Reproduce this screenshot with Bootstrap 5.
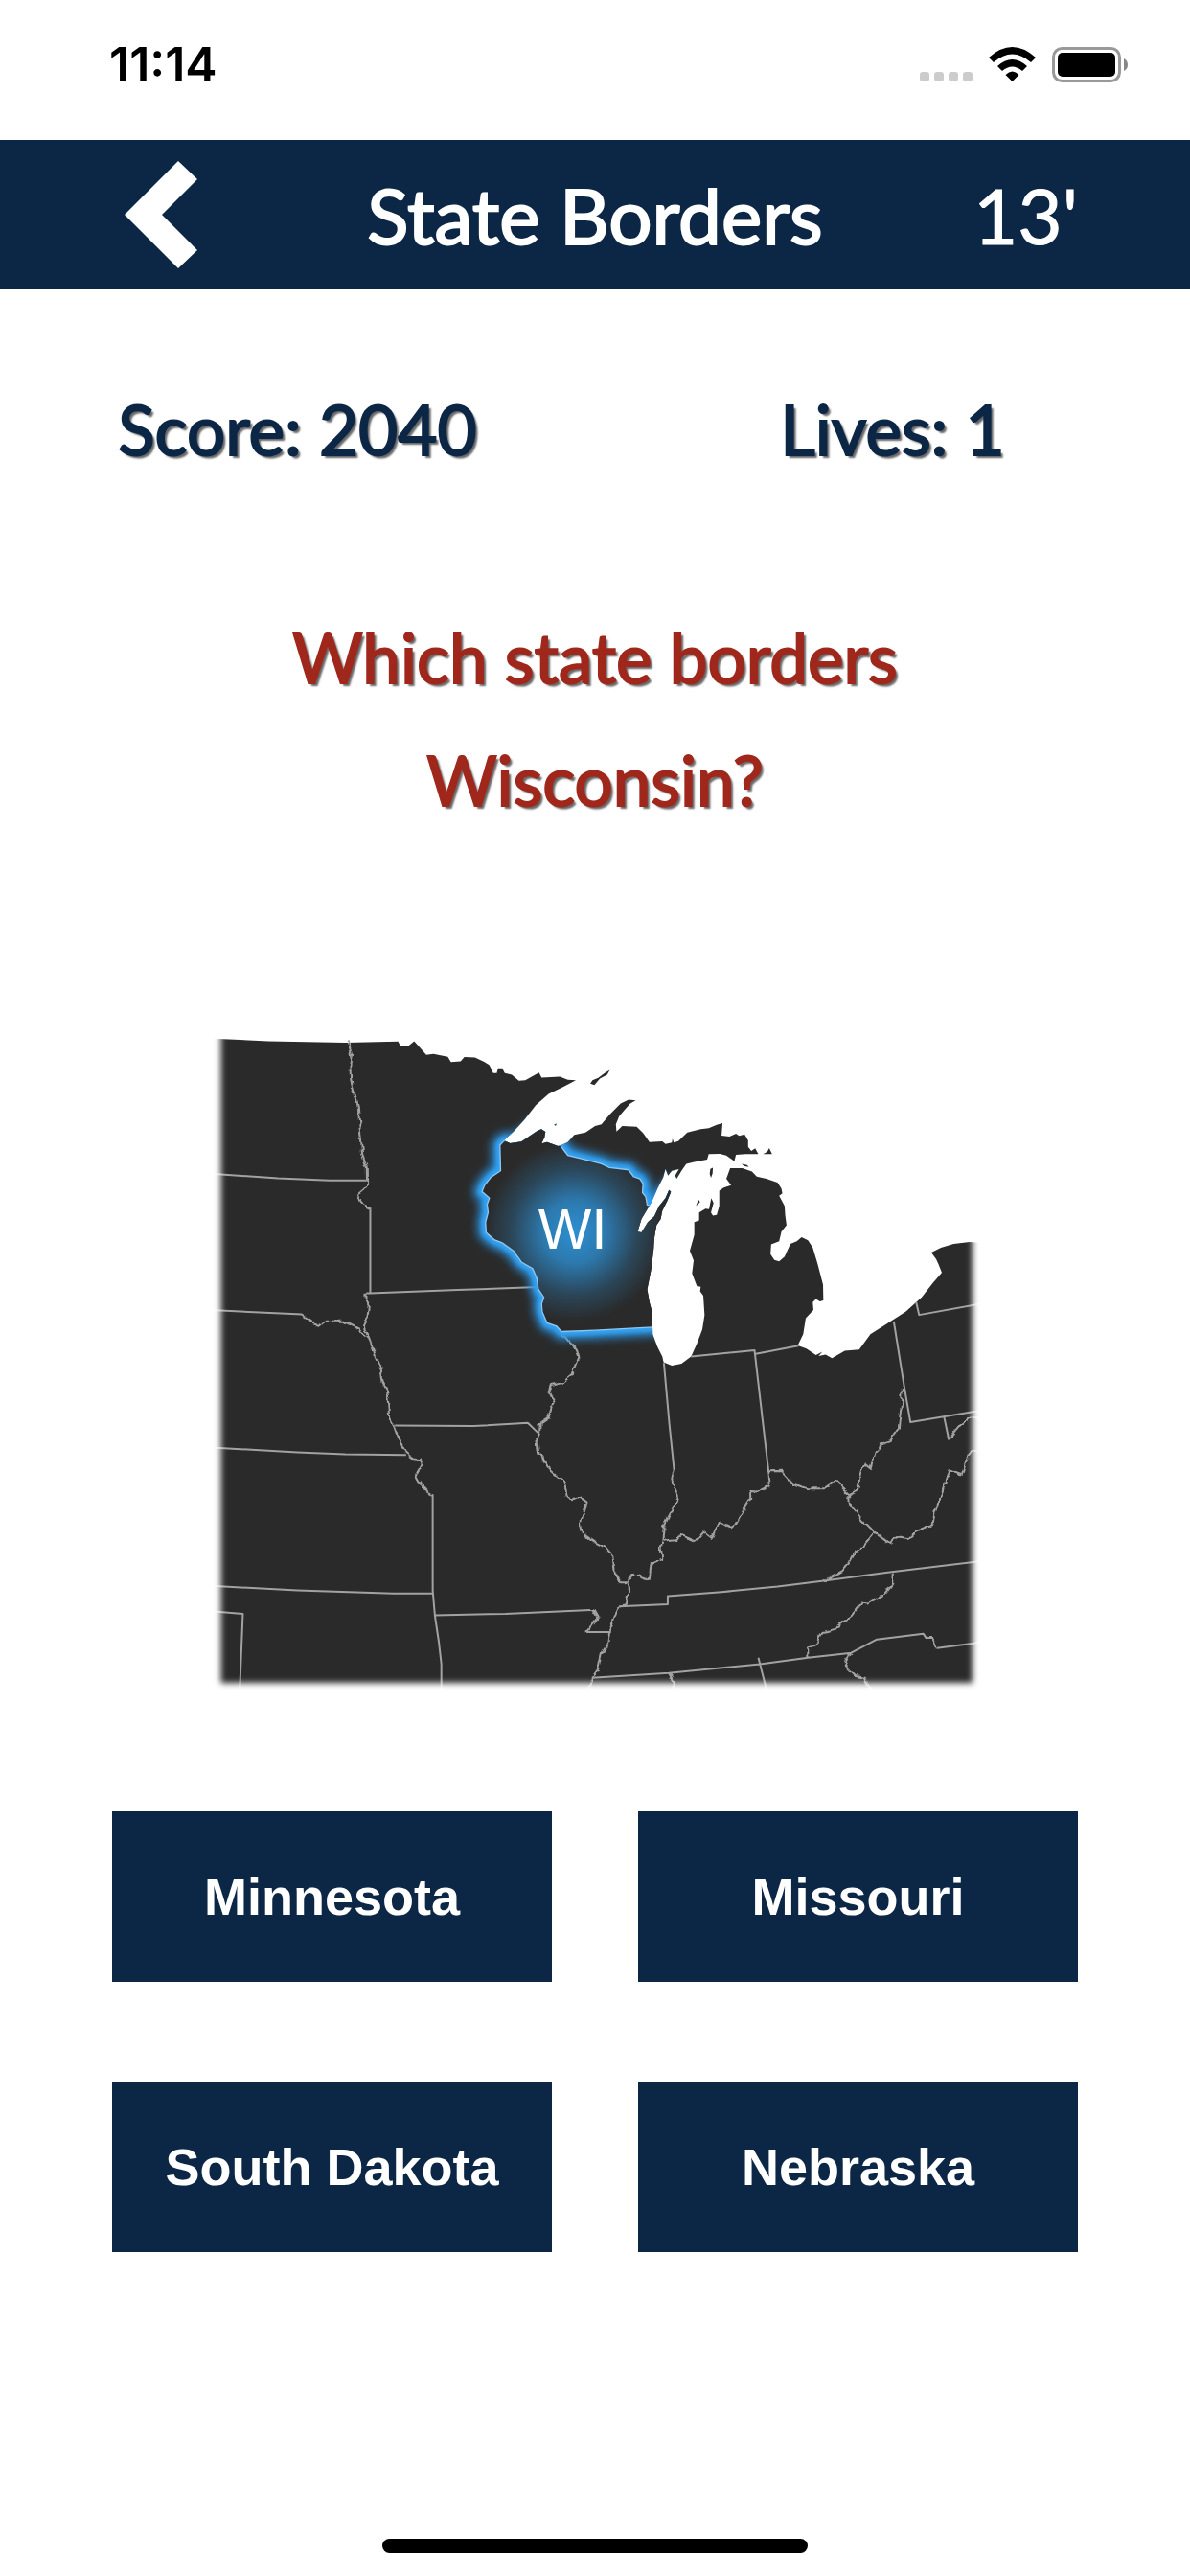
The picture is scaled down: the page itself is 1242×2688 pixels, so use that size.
<!DOCTYPE html>
<html lang="en">
<head>
<meta charset="utf-8">
<meta name="viewport" content="width=device-width, initial-scale=1">
<title>State Borders</title>
<link href="https://cdn.jsdelivr.net/npm/bootstrap@5.3.0/dist/css/bootstrap.min.css" rel="stylesheet">
<style>
  :root { --navy: #0c2646; --brick: #a0271b; --gutter: 117px; }
  body { font-family: Lato, sans-serif; background: #fff; }
  .status-bar { height: 146px; padding: 0 64px 12px 114px; color: #000; }
  .clock { font: 600 50px/56px Inter, sans-serif; }
  .status-icons { height: 40px; width: 220px; }
  .title-bar { height: 156px; background: var(--navy); padding: 0 var(--gutter); color: #fff; }
  .title-bar h1, .timer { font-size: 80px; line-height: 96px; }
  .title-bar h1 { -webkit-text-stroke: 2px #fff; }
  .timer { -webkit-text-stroke: 1px #fff; }
  .back-btn { padding: 0 13px; }
  .back-btn svg { width: 76px; height: 112px; }
  .stats { padding-top: 98px; font-size: 71px; line-height: 96px; color: var(--navy); }
  .game-text { -webkit-text-stroke: 2px currentColor; text-shadow: 3px 3px 2px rgba(0, 0, 0, .6); }
  .question { padding: 126px 200px 0; font-size: 71px; line-height: 128px; color: var(--brick); }
  .map-area { padding-top: 180px; }
  .map-area svg { width: 67%; }
  .answers { padding: 110px var(--gutter) 0; }
  .answers .row { --bs-gutter-x: 90px; --bs-gutter-y: 104px; margin-top: 0; }
  .answers .col-6 { margin-top: 0; margin-bottom: var(--bs-gutter-y); }
  .answer-btn { height: 178px; background: var(--navy); color: #fff; font: 700 54px/64px "Liberation Sans", sans-serif; }
  .answer-btn:hover { background: #16386a; color: #fff; }
  .home-bar { width: 444px; height: 15px; margin-bottom: 24px; }
</style>
</head>
<body>
<div class="d-flex flex-column min-vh-100">
  <div class="status-bar d-flex justify-content-between align-items-center">
    <span class="clock">11:14</span>
    <svg class="status-icons" viewBox="958 47 220 40" aria-hidden="true">
      <g fill="#ccc"><rect x="960" y="75" width="10" height="10" rx="3"/><rect x="975" y="75" width="10" height="10" rx="3"/><rect x="990" y="75" width="10" height="10" rx="3"/><rect x="1005" y="75" width="10" height="10" rx="3"/></g>
      <path d="M1032 60Q1056.500 38 1081 60L1076 65Q1056.500 48 1037 65ZM1041 69Q1056.500 55 1072 69L1067 74Q1056.500 65 1046 74ZM1049.500 78Q1056.500 71 1063.500 78L1056.500 85Z"/>
      <rect x="1099.500" y="50.500" width="69" height="34" rx="9" fill="none" stroke="#999" stroke-width="3"/>
      <rect x="1104" y="55" width="60" height="25" rx="5"/>
      <path d="M1173 61Q1177 63 1177 67.500T1173 74Z" fill="#888"/>
    </svg>
  </div>

  <header class="title-bar">
    <div class="row g-0 h-100 align-items-center">
      <div class="col-2"><button type="button" class="btn border-0 rounded-0 back-btn" aria-label="Back">
        <svg viewBox="130 168 76 112" class="d-block" aria-hidden="true"><path d="M186 168L206 187 169 224 206 261 186 280 130 224Z" fill="#fff"/></svg>
      </button></div>
      <h1 class="col-8 m-0 text-center fw-normal">State Borders</h1>
      <div class="col-2 timer text-end">13'</div>
    </div>
  </header>

  <main class="flex-grow-1">
    <div class="row g-0 text-center stats game-text">
      <div class="col-6">Score: 2040</div>
      <div class="col-6">Lives: 1</div>
    </div>
    <h2 class="question game-text m-0 text-center fw-normal">Which state borders Wisconsin?</h2>

    <div class="map-area text-center">
      <svg viewBox="-15 0 2490 2160" role="img" aria-label="Map with Wisconsin highlighted">
        <defs>
          <filter id="soft8" x="-5%" y="-5%" width="110%" height="110%"><feGaussianBlur stdDeviation="9"/></filter>
          <filter id="glowWide" x="-20%" y="-20%" width="140%" height="140%"><feGaussianBlur stdDeviation="15"/></filter>
          <filter id="glowTight" x="-20%" y="-20%" width="140%" height="140%"><feGaussianBlur stdDeviation="7"/></filter>
          <filter id="meander" filterUnits="userSpaceOnUse" x="0" y="0" width="2490" height="2160"><feTurbulence type="fractalNoise" baseFrequency=".035" numOctaves="2" seed="4"/><feDisplacementMap in="SourceGraphic" scale="20" xChannelSelector="R" yChannelSelector="G"/></filter>
          <mask id="fade" maskUnits="userSpaceOnUse" x="0" y="0" width="2490" height="2160"><rect x="61" y="-80" width="2348" height="2169" fill="#fff" filter="url(#soft8)"/></mask>
          <radialGradient id="wiCore" gradientUnits="userSpaceOnUse" cx="1165" cy="680" r="280">
            <stop offset="0" stop-color="#2d8fd2"/><stop offset=".35" stop-color="#2d8fd2" stop-opacity=".78"/><stop offset=".7" stop-color="#2d8fd2" stop-opacity=".28"/><stop offset="1" stop-color="#2d8fd2" stop-opacity="0"/>
          </radialGradient>
          <path id="land" d="M20 76L210 85 450 90 615 86 622 100 645 102 665 85 680 102 703 128 725 125 770 134 780 150 810 148 822 135 855 136 885 150 900 160 912 185 923 185 927 170 940 170 948 185 970 190 992 209 1012 207 1055 183 1063 199 1120 196 1145 206 1170 207 1130 228 1085 250 1045 285 1010 330 975 368 945 395 965 404 1000 399 1050 365 1062 360 1075 368 1072 385 1063 405 1080 400 1115 413 1125 410 1145 400 1165 378 1200 370 1230 350 1250 345 1275 315 1310 280 1335 268 1357 270 1340 280 1322 300 1305 320 1295 345 1297 367 1315 350 1360 352 1380 372 1400 400 1440 398 1450 406 1470 402 1472 390 1476 402 1490 397 1518 370 1560 360 1585 357 1610 346 1628 341 1625 380 1650 383 1670 374 1680 381 1697 376 1708 395 1708 415 1718 428 1730 420 1740 438 1700 438 1670 440 1665 460 1640 442 1620 437 1585 438 1580 455 1540 462 1515 468 1500 490 1485 515 1480 505 1492 485 1470 490 1458 505 1450 485 1443 510 1425 545 1405 590 1390 615 1375 640 1363 680 1375 682 1395 650 1415 632 1430 600 1450 575 1461 550 1467 556 1455 585 1440 615 1435 640 1422 660 1415 700 1413 735 1405 800 1393 860 1400 900 1408 930 1410 1000 1425 1040 1440 1070 1444 1088 1470 1098 1500 1092 1530 1070 1548 1030 1565 985 1572 940 1568 880 1558 866 1560 852 1548 850 1533 810 1538 770 1526 740 1540 690 1540 650 1555 645 1555 620 1575 608 1586 610 1593 575 1600 590 1592 620 1598 630 1610 628 1618 600 1618 552 1632 542 1655 535 1640 515 1652 482 1690 482 1720 492 1735 508 1765 515 1800 527 1812 545 1815 560 1805 568 1822 600 1824 630 1828 660 1812 680 1805 710 1780 720 1778 750 1790 768 1805 773 1822 758 1840 718 1860 710 1875 697 1895 707 1910 730 1925 780 1942 845 1943 895 1932 898 1920 890 1910 900 1912 925 1888 950 1880 1000 1863 1035 1890 1045 1920 1065 1940 1055 1928 1068 1950 1064 1970 1075 2010 1052 2055 1048 2090 1000 2130 975 2200 930 2250 885 2285 840 2313 808 2302 780 2295 765 2280 745 2310 730 2350 718 2400 712 2440 715 2440 2150 20 2150ZM1215 218L1222 207 1240 200 1260 185 1276 175 1268 190 1245 202 1228 222ZM1755 438L1768 430 1774 419 1780 432 1783 438ZM1588 500L1590 484 1598 480 1597 498 1592 512ZM1688 468L1705 472 1710 478 1695 475ZM1545 600L1553 580 1558 588ZM1102 345L1110 343 1107 350Z"/>
          <clipPath id="landClip"><use href="#land"/></clipPath>
          <path id="wi" d="M990 394L945 397 933 410 935 490 905 510 885 535 877 555 900 575 893 595 896 620 888 650 890 683 915 705 940 715 975 740 1000 775 1035 795 1048 825 1053 860 1070 885 1063 905 1065 930 1080 965 1110 975 1125 992 1230 988 1410 978 1480 974 1480 560 1462 542 1412 600 1393 597 1388 570 1378 558 1380 530 1370 515 1350 508 1335 487 1275 480 1250 468 1200 455 1145 442 1130 422 1118 405 1060 340Z"/>
        </defs>
        <g mask="url(#fade)">
          <use href="#land" fill="#2a2a2a"/>
          <g fill="none" stroke="#a2a2a2" stroke-width="6" stroke-linejoin="round">
            <path d="M528 605V870M723 1500V1800L730 1880 742 1960 750 2030V2120M30 499L240 513 400 520 517 520M515 872H528L800 862 1050 853M30 925L315 938M30 1354L300 1369 450 1375 640 1377M30 1786L300 1800 600 1810 723 1809M30 1865L130 1873 120 2120M605 1285L850 1287 1020 1277 1052 1308M730 1878L950 1873 1215 1861M1203 1930H1280M1445 1090L1462 1280 1477 1425M1530 1070L1728 1050 1772 1430M1728 1062L1865 1036M2163 960L2195 1160 2215 1275 2450 1236M2233 900L2242 940 2450 902M2320 1258L2335 1330M1305 1850L1457 1843V1818L1625 1805 1800 1788 1945 1770 2150 1743 2450 1707M1220 2073L1460 2058 1745 2030 1895 2010 2030 1995 2110 1953 2255 1935 2265 1950M2298 1980L2450 1960M1740 2010L1768 2120"/>
            <path filter="url(#meander)" d="M460 85L470 130 465 160 467 205 480 250 490 290 495 350 500 400 503 440 517 480 518 535 508 548 488 565 505 595 528 606M516 870L516 900 526 915 522 945 508 975 522 1010 535 1040 545 1070 562 1110 567 1150 580 1175 587 1215 590 1265 603 1290 615 1325 640 1372 665 1390 685 1392 690 1405 670 1440 690 1475 705 1492 723 1502M314 938L345 962 372 973 385 960 445 960 495 985 510 1010 525 1012M1125 992L1145 1020 1172 1045 1180 1075 1160 1125 1130 1150 1092 1158 1085 1180 1100 1210 1085 1260 1058 1278 1057 1308 1048 1330 1055 1375 1080 1415 1132 1460 1142 1500 1155 1518 1180 1507 1205 1525 1185 1590 1190 1622 1230 1650 1260 1665 1285 1695 1292 1745 1310 1775 1330 1775 1335 1800 1325 1840 1308 1845 1290 1885 1275 1930 1270 1965 1250 2000 1240 2045 1222 2070 1210 2110M1215 1861L1225 1862 1238 1885 1203 1930M1477 1425L1470 1455 1490 1510 1460 1570 1445 1600 1440 1650 1435 1670 1440 1700 1405 1715 1400 1765 1350 1747 1330 1775M1445 1645L1485 1640 1500 1628 1545 1647 1570 1617 1595 1637 1620 1585 1662 1605 1690 1555 1715 1515 1715 1490 1740 1492 1777 1473 1772 1428 1810 1427 1845 1465 1895 1482 1945 1482 1980 1457 2023 1500 2050 1487 2060 1430 2072 1402 2090 1418 2105 1370 2120 1345 2150 1335 2178 1295 2187 1220 2190 1165M2335 1330L2370 1285 2395 1265 2440 1262M2440 1360L2395 1375 2375 1440 2335 1425 2315 1490 2290 1560 2285 1595 2240 1610 2210 1640 2175 1635 2150 1655 2105 1620 2065 1580 2025 1530 2023 1500M2105 1620L2070 1660 2040 1680 2010 1735 1945 1770M2160 1743L2158 1780 2130 1815 2080 1845 2060 1842 2030 1880 1980 1920 1940 1930 1915 1975 1895 1980 1895 2010M2262 1948L2285 1948 2298 1980M2030 1995L2010 2035 2040 2065 2070 2070 2095 2120M1460 2058L1473 2080 1475 2120"/>
          </g>
          <g clip-path="url(#landClip)">
            <use href="#wi" fill="none" stroke="#2a93e0" stroke-width="50" filter="url(#glowWide)"/>
            <use href="#wi" fill="none" stroke="#36a4f4" stroke-width="24" filter="url(#glowTight)"/>
            <use href="#wi" fill="#2a2a2a"/>
            <use href="#wi" fill="url(#wiCore)"/>
            <use href="#wi" fill="none" stroke="#8fc6ee" stroke-width="4"/>
          </g>
          <text x="1160" y="733" text-anchor="middle" font-family="Liberation Sans, sans-serif" font-size="176" fill="#fff">WI</text>
        </g>
      </svg>
    </div>

    <div class="answers">
      <div class="row">
        <div class="col-6"><button type="button" class="btn answer-btn w-100 border-0 rounded-0">Minnesota</button></div>
        <div class="col-6"><button type="button" class="btn answer-btn w-100 border-0 rounded-0">Missouri</button></div>
        <div class="col-6"><button type="button" class="btn answer-btn w-100 border-0 rounded-0">South Dakota</button></div>
        <div class="col-6"><button type="button" class="btn answer-btn w-100 border-0 rounded-0">Nebraska</button></div>
      </div>
    </div>
  </main>

  <div class="home-bar bg-black rounded-pill mx-auto"></div>
</div>
<script src="https://cdn.jsdelivr.net/npm/bootstrap@5.3.0/dist/js/bootstrap.bundle.min.js"></script>
</body>
</html>
